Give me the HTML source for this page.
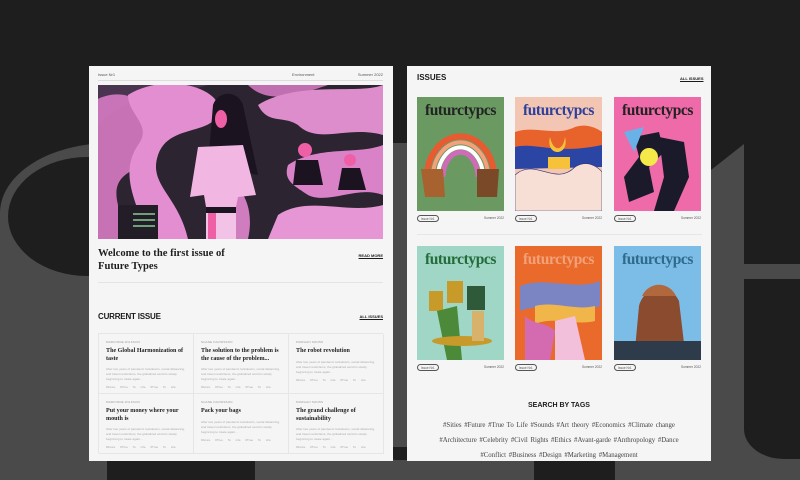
<!DOCTYPE html>
<html><head><meta charset="utf-8">
<style>
*{margin:0;padding:0;box-sizing:border-box}
body{width:800px;height:480px;overflow:hidden;background:#1f1e1f;position:relative;font-family:"Liberation Sans",sans-serif;color:#1a1a1a}
.abs{position:absolute}
.g{background:#4b4a4b}
.d{background:#1f1e1f}
.panel{position:absolute;top:66px;width:304px;height:395px;background:#f5f5f5}
.serif{font-family:"Liberation Serif",serif;font-weight:bold}
.tiny{font-size:4px;color:#555}
.card{position:absolute;width:95px;height:60px;border-right:1px solid #e6e6e6;border-bottom:1px solid #e6e6e6;padding:6px 7px}
.card .au{font-size:3px;color:#999;letter-spacing:.2px}
.card h4{font-family:"Liberation Serif",serif;font-weight:bold;font-size:6.1px;line-height:7.5px;margin-top:4px;color:#222}
.card p{font-size:3.1px;line-height:5px;color:#aaa;margin-top:4px}
.card .tg{font-size:3px;color:#aaa;margin-top:3px;word-spacing:4px;white-space:nowrap}
.cover{position:absolute;width:87px;height:114px;overflow:hidden}
.cover .t{position:absolute;left:0;width:100%;text-align:center;top:5px;font-family:"Liberation Serif",serif;font-weight:bold;font-size:15.5px;letter-spacing:-.4px}
.lab{position:absolute;width:87px;height:6px}
.lab span{position:absolute;font-size:3.2px;color:#555}
.lab .pill{left:0;top:0;border:0.6px solid #555;border-radius:4px;padding:0.5px 3px}
.lab .r{right:0;top:1px}
.tags{position:absolute;left:407px;width:304px;text-align:center;font-family:"Liberation Serif",serif;font-size:6.8px;color:#444;word-spacing:1px}
</style></head><body>
<div class="abs g" style="left:0;top:143px;width:800px;height:337px;border-top-left-radius:110px 70px"></div>
<div class="abs d" style="left:8px;top:157px;width:160px;height:119px;border-radius:80px 0 0 80px / 60px 0 0 60px"></div>
<div class="abs d" style="left:700px;top:120px;width:100px;height:24px"></div>
<div class="abs d" style="left:711px;top:120px;width:33px;height:50px;clip-path:polygon(0 0,100% 0,100% 48%,0 100%)"></div>
<div class="abs d" style="left:744px;top:120px;width:56px;height:144px"></div>
<div class="abs d" style="left:744px;top:279px;width:56px;height:180px;border-bottom-left-radius:40px 30px"></div>
<div class="abs d" style="left:107px;top:460px;width:148px;height:20px"></div>
<div class="abs d" style="left:534px;top:460px;width:81px;height:20px"></div>
<div class="abs d" style="left:383px;top:447px;width:40px;height:13px;border-radius:0 0 20px 20px"></div>

<div class="panel" style="left:89px">
  <div class="abs tiny" style="left:9px;top:6px">Issue Nr1</div>
  <div class="abs tiny" style="left:203px;top:6px">Environment</div>
  <div class="abs tiny" style="right:10px;top:6px">Summer 2022</div>
  <div class="abs" style="left:9px;top:14px;width:285px;height:1px;background:#ddd"></div>
  <div class="abs" style="left:9px;top:19px;width:285px;height:154px;overflow:hidden;background:#3a2a3a">
    <svg width="285" height="154" viewBox="0 0 285 154">
      <rect width="285" height="154" fill="#4a3550"/>
      <path d="M0 40 C40 0 80 10 110 0 L285 0 L285 154 L0 154Z" fill="#2c2430"/>
      <path d="M-10 20 C30 -10 70 30 60 60 C50 90 10 80 20 120 C30 150 60 140 70 160 L-10 160Z" fill="#d77bc4" opacity=".9"/>
      <path d="M30 10 C70 -15 130 5 120 30 C110 50 70 40 60 70 C50 100 80 110 90 154 L50 154 C40 120 20 90 40 60 C55 40 30 30 30 10Z" fill="#e38ed0"/>
      <path d="M150 0 C170 20 200 10 230 0Z" fill="#c06fb0"/>
      <path d="M160 20 C200 -5 260 10 285 0 L285 50 C250 40 220 60 200 40 C185 30 170 40 160 20Z" fill="#dd8ccc"/>
      <path d="M190 80 C220 60 260 70 285 60 L285 110 C260 100 230 120 210 110 C195 100 185 95 190 80Z" fill="#d982c8"/>
      <path d="M180 130 C210 110 250 130 285 120 L285 154 L170 154Z" fill="#e696d4"/>
      <path d="M100 100 C130 80 160 110 150 154 L120 154 C125 130 110 120 100 100Z" fill="#cf7dbf"/>
      <rect x="20" y="120" width="40" height="34" fill="#231d27"/>
      <rect x="35" y="128" width="22" height="2" fill="#6fa07a"/><rect x="35" y="134" width="22" height="2" fill="#6fa07a"/><rect x="35" y="140" width="22" height="2" fill="#6fa07a"/>
      <path d="M115 20 C120 5 140 5 145 20 L160 90 L110 80Z" fill="#1b1320"/>
      <ellipse cx="123" cy="34" rx="6" ry="9" fill="#ef5fa6"/>
      <path d="M100 62 L145 60 L158 110 L140 112 L138 122 L108 122 L106 110 L92 112Z" fill="#f1b6e2"/>
      <rect x="108" y="122" width="30" height="6" fill="#1a1520"/>
      <rect x="108" y="128" width="30" height="26" fill="#f2c3e6"/>
      <rect x="110" y="128" width="8" height="26" fill="#ef5fa6"/>
      <circle cx="207" cy="65" r="7" fill="#ef5fa6"/><path d="M198 75 L220 75 L225 100 L195 100Z" fill="#1b1320"/>
      <circle cx="252" cy="75" r="6" fill="#ef5fa6"/><path d="M244 83 L262 83 L268 105 L240 105Z" fill="#1b1320"/>
    </svg>
  </div>
  <div class="abs serif" style="left:9px;top:181px;font-size:10.6px;line-height:13px;color:#1e1e1e">Welcome to the first issue of<br>Future Types</div>
  <div class="abs" style="right:10px;top:187px;font-size:4px;font-weight:bold;text-decoration:underline">READ MORE</div>
  <div class="abs" style="left:9px;top:216px;width:285px;height:1px;background:#e3e3e3"></div>
  <div class="abs" style="left:9px;top:246px;font-size:8px;font-weight:bold;letter-spacing:-.2px">CURRENT ISSUE</div>
  <div class="abs" style="right:10px;top:248px;font-size:4px;font-weight:bold;text-decoration:underline">ALL ISSUES</div>
  <div class="abs" style="left:9px;top:267px;width:285px;height:120px;border-top:1px solid #e6e6e6;border-left:1px solid #e6e6e6">
    <div class="card" style="left:0;top:0"><div class="au">MARIONNE WILKSON</div><h4>The Global Harmonization of taste</h4><p>After two years of pandemic lockdowns, social distancing, and travel restrictions, the globalized world is slowly beginning to rotate again...</p><div class="tg">#future #True To Life #True To Life</div></div>
    <div class="card" style="left:95px;top:0"><div class="au">SHANE DAVIDSSON</div><h4>The solution to the problem is the cause of the problem...</h4><p>After two years of pandemic lockdowns, social distancing, and travel restrictions, the globalized world is slowly beginning to rotate again...</p><div class="tg">#future #True To Life #True To Life</div></div>
    <div class="card" style="left:190px;top:0"><div class="au">MORGAN SONSS</div><h4>The robot revolution</h4><p>After two years of pandemic lockdowns, social distancing, and travel restrictions, the globalized world is slowly beginning to rotate again...</p><div class="tg">#future #True To Life #True To Life</div></div>
    <div class="card" style="left:0;top:60px"><div class="au">MARIONNE WILKSON</div><h4>Put your money where your mouth is</h4><p>After two years of pandemic lockdowns, social distancing, and travel restrictions, the globalized world is slowly beginning to rotate again...</p><div class="tg">#future #True To Life #True To Life</div></div>
    <div class="card" style="left:95px;top:60px"><div class="au">SHANE DAVIDSSON</div><h4>Pack your bags</h4><p>After two years of pandemic lockdowns, social distancing, and travel restrictions, the globalized world is slowly beginning to rotate again...</p><div class="tg">#future #True To Life #True To Life</div></div>
    <div class="card" style="left:190px;top:60px"><div class="au">MORGAN SONSS</div><h4>The grand challenge of sustainability</h4><p>After two years of pandemic lockdowns, social distancing, and travel restrictions, the globalized world is slowly beginning to rotate again...</p><div class="tg">#future #True To Life #True To Life</div></div>
  </div>
</div>

<div class="panel" style="left:407px"></div>
<div class="abs" style="left:417px;top:73px;font-size:8px;font-weight:bold">ISSUES</div>
<div class="abs" style="left:680px;top:76px;font-size:4px;font-weight:bold;text-decoration:underline">ALL ISSUES</div>

<div class="cover" style="left:417px;top:97px;background:#6a9a62">
  <svg class="abs" width="87" height="114" style="left:0;top:0">
    <path d="M10 80 A33 40 0 0 1 77 80" stroke="#e85a2f" stroke-width="6" fill="none"/>
    <path d="M16 80 A27 34 0 0 1 71 80" stroke="#f5a07a" stroke-width="4" fill="none"/>
    <path d="M21 80 A22 29 0 0 1 66 80" stroke="#fff" stroke-width="4" fill="none"/>
    <path d="M26 80 A17 24 0 0 1 61 80" stroke="#d06bb8" stroke-width="5" fill="none"/>
    <path d="M4 72 L26 72 L28 100 L8 100Z" fill="#a7622f"/>
    <path d="M60 72 L82 72 L80 100 L60 100Z" fill="#7a4a28"/>
  </svg>
  <div class="t" style="color:#222">futurctypcs</div>
</div>
<div class="cover" style="left:515px;top:97px;background:#f3c5b3">
  <svg class="abs" width="87" height="114" style="left:0;top:0">
    <path d="M0 35 C20 28 40 40 60 30 C75 25 87 35 87 35 L87 55 L0 55Z" fill="#e8632b"/>
    <path d="M0 50 C20 45 40 58 87 48 L87 70 L0 72Z" fill="#2b45a5"/>
    <path d="M35 40 C30 60 55 60 50 40 C48 55 38 55 35 40Z" fill="#f6c23a"/>
    <rect x="33" y="60" width="22" height="12" fill="#f6c23a"/>
    <path d="M0 78 C20 60 40 90 60 70 C75 60 87 75 87 75 L87 114 L0 114Z" fill="#f8dfd6" stroke="#34306e" stroke-width=".6"/>
  </svg>
  <div class="t" style="color:#2b3f9c">futurctypcs</div>
</div>
<div class="cover" style="left:614px;top:97px;background:#ee6aa8">
  <svg class="abs" width="87" height="114" style="left:0;top:0">
    <path d="M20 40 L45 35 L50 55 L35 70 L40 95 L15 105 L10 80 L25 60Z" fill="#1a1a2a"/>
    <path d="M45 40 L70 45 L75 80 L60 114 L40 114 L50 80Z" fill="#1a1a2a"/>
    <path d="M10 35 L30 30 L20 55Z" fill="#6ab1e8"/>
    <circle cx="35" cy="60" r="9" fill="#f5e94a"/>
  </svg>
  <div class="t" style="color:#222">futurctypcs</div>
</div>
<div class="lab" style="left:417px;top:215px"><span class="pill">Issue Nr1</span><span class="r">Summer 2022</span></div>
<div class="lab" style="left:515px;top:215px"><span class="pill">Issue Nr1</span><span class="r">Summer 2022</span></div>
<div class="lab" style="left:614px;top:215px"><span class="pill">Issue Nr1</span><span class="r">Summer 2022</span></div>
<div class="abs" style="left:417px;top:234px;width:285px;height:1px;background:#e6e6e6"></div>

<div class="cover" style="left:417px;top:246px;background:#9fd6c6">
  <svg class="abs" width="87" height="114" style="left:0;top:0">
    <rect x="12" y="45" width="14" height="20" fill="#c79a2a"/><rect x="30" y="35" width="16" height="22" fill="#c79a2a"/>
    <rect x="50" y="40" width="18" height="24" fill="#2f5a3a"/>
    <path d="M20 65 L30 114 L45 114 L40 60Z" fill="#4c8a3a"/>
    <ellipse cx="45" cy="95" rx="30" ry="5" fill="#c79a2a"/>
    <rect x="55" y="65" width="12" height="30" fill="#d8b16a"/>
  </svg>
  <div class="t" style="color:#246b3a">futurctypcs</div>
</div>
<div class="cover" style="left:515px;top:246px;background:#ea6a2c">
  <svg class="abs" width="87" height="114" style="left:0;top:0">
    <path d="M5 40 C30 30 60 45 85 35 L85 60 C60 70 30 55 5 65Z" fill="#7c85c4"/>
    <path d="M20 60 C40 55 60 65 80 60 L80 75 C60 80 40 70 20 78Z" fill="#f0b64a"/>
    <path d="M10 70 C20 80 30 75 40 85 L35 114 L10 114Z" fill="#d46bb0"/>
    <path d="M40 75 L60 70 L70 114 L40 114Z" fill="#f3c0dc"/>
  </svg>
  <div class="t" style="color:#f2a27a">futurctypcs</div>
</div>
<div class="cover" style="left:614px;top:246px;background:#7cbde8">
  <svg class="abs" width="87" height="114" style="left:0;top:0">
    <path d="M20 114 L25 60 C30 40 55 35 65 55 L72 114Z" fill="#8a4b2e"/>
    <path d="M28 50 C35 35 55 35 62 50" fill="#b0683c"/>
    <rect x="0" y="95" width="87" height="19" fill="#2d3b4a"/>
  </svg>
  <div class="t" style="color:#2f6a8a">futurctypcs</div>
</div>
<div class="lab" style="left:417px;top:364px"><span class="pill">Issue Nr1</span><span class="r">Summer 2022</span></div>
<div class="lab" style="left:515px;top:364px"><span class="pill">Issue Nr1</span><span class="r">Summer 2022</span></div>
<div class="lab" style="left:614px;top:364px"><span class="pill">Issue Nr1</span><span class="r">Summer 2022</span></div>

<div class="abs" style="left:407px;width:304px;top:402px;text-align:center;font-size:7px;font-weight:bold">SEARCH BY TAGS</div>
<div class="tags" style="top:422px">#Sities #Future #True To Life #Sounds #Art theory #Economics #Climate change</div>
<div class="tags" style="top:437px">#Architecture #Celebrity #Civil Rights #Ethics #Avant-garde #Anthropology #Dance</div>
<div class="tags" style="top:452px">#Conflict #Business #Design #Marketing #Management</div>
</body></html>
